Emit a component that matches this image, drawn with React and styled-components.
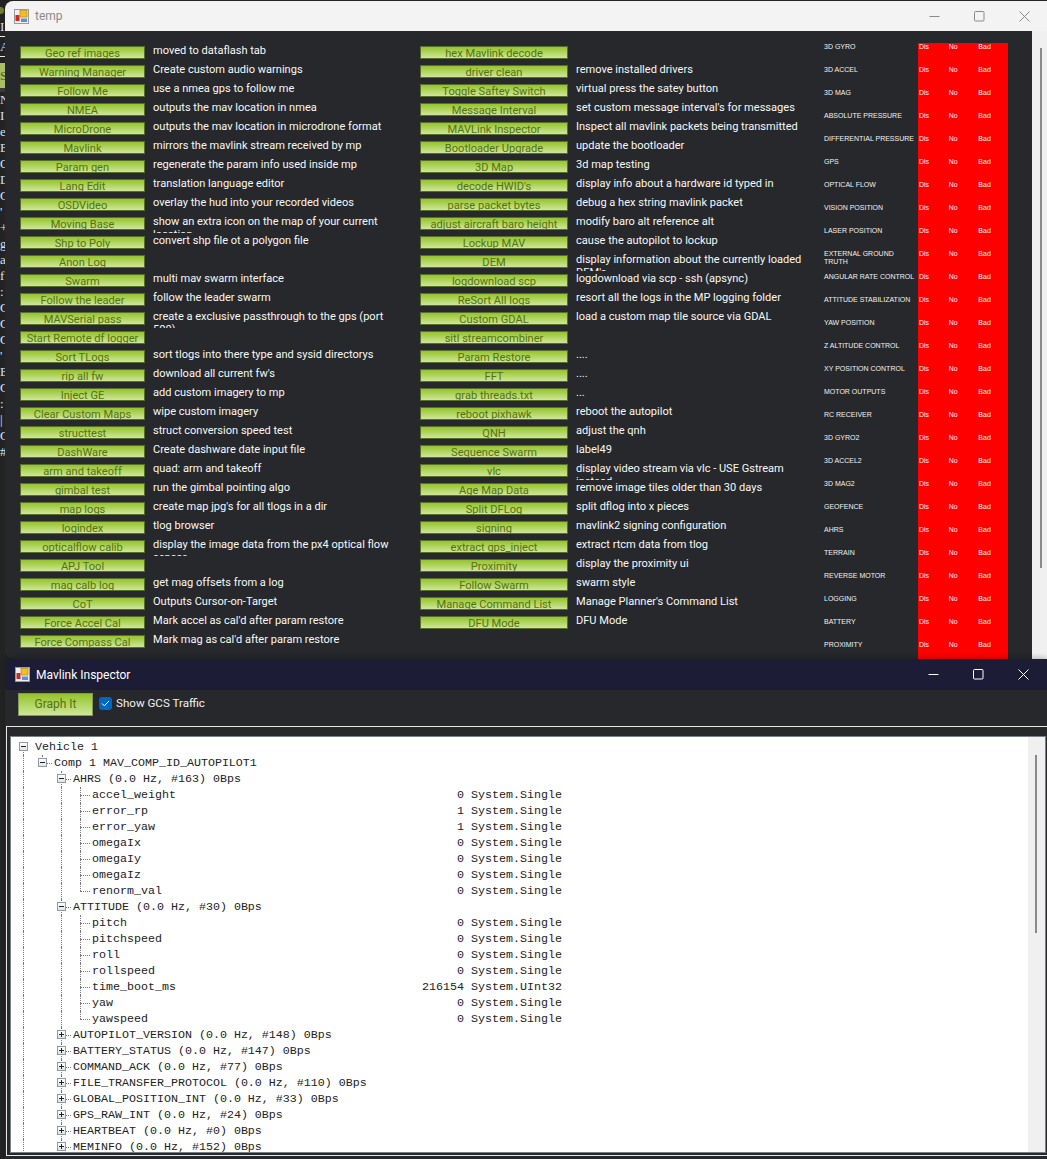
import React from "react"
import styled, { createGlobalStyle } from "styled-components"

const leftRows = [
  ["Geo ref images", "moved to dataflash tab"],
  ["Warning Manager", "Create custom audio warnings"],
  ["Follow Me", "use a nmea gps to follow me"],
  ["NMEA", "outputs the mav location in nmea"],
  ["MicroDrone", "outputs the mav location in microdrone format"],
  ["Mavlink", "mirrors the mavlink stream received by mp"],
  ["Param gen", "regenerate the param info used inside mp"],
  ["Lang Edit", "translation language editor"],
  ["OSDVideo", "overlay the hud into your recorded videos"],
  ["Moving Base", "show an extra icon on the map of your current location"],
  ["Shp to Poly", "convert shp file ot a polygon file"],
  ["Anon Log", ""],
  ["Swarm", "multi mav swarm interface"],
  ["Follow the leader", "follow the leader swarm"],
  ["MAVSerial pass", "create a exclusive passthrough to the gps (port 500)"],
  ["Start Remote df logger", ""],
  ["Sort TLogs", "sort tlogs into there type and sysid directorys"],
  ["rip all fw", "download all current fw's"],
  ["Inject GE", "add custom imagery to mp"],
  ["Clear Custom Maps", "wipe custom imagery"],
  ["structtest", "struct conversion speed test"],
  ["DashWare", "Create dashware date input file"],
  ["arm and takeoff", "quad: arm and takeoff"],
  ["gimbal test", "run the gimbal pointing algo"],
  ["map logs", "create map jpg's for all tlogs in a dir"],
  ["logindex", "tlog browser"],
  ["opticalflow calib", "display the image data from the px4 optical flow sensor"],
  ["APJ Tool", ""],
  ["mag calb log", "get mag offsets from a log"],
  ["CoT", "Outputs Cursor-on-Target"],
  ["Force Accel Cal", "Mark accel as cal'd after param restore"],
  ["Force Compass Cal", "Mark mag as cal'd after param restore"],
]

const rightRows = [
  ["hex Mavlink decode", ""],
  ["driver clean", "remove installed drivers"],
  ["Toggle Saftey Switch", "virtual press the satey button"],
  ["Message Interval", "set custom message interval's for messages"],
  ["MAVLink Inspector", "Inspect all mavlink packets being transmitted"],
  ["Bootloader Upgrade", "update the bootloader"],
  ["3D Map", "3d map testing"],
  ["decode HWID's", "display info about a hardware id typed in"],
  ["parse packet bytes", "debug a hex string mavlink packet"],
  ["adjust aircraft baro height", "modify baro alt reference alt"],
  ["Lockup MAV", "cause the autopilot to lockup"],
  ["DEM", "display information about the currently loaded DEM's"],
  ["logdownload scp", "logdownload via scp - ssh (apsync)"],
  ["ReSort All logs", "resort all the logs in the MP logging folder"],
  ["Custom GDAL", "load a custom map tile source via GDAL"],
  ["sitl streamcombiner", ""],
  ["Param Restore", "...."],
  ["FFT", "...."],
  ["grab threads.txt", "..."],
  ["reboot pixhawk", "reboot the autopilot"],
  ["QNH", "adjust the qnh"],
  ["Sequence Swarm", "label49"],
  ["vlc", "display video stream via vlc - USE Gstream instead"],
  ["Age Map Data", "remove image tiles older than 30 days"],
  ["Split DFLog", "split dflog into x pieces"],
  ["signing", "mavlink2 signing configuration"],
  ["extract gps_inject", "extract rtcm data from tlog"],
  ["Proximity", "display the proximity ui"],
  ["Follow Swarm", "swarm style"],
  ["Manage Command List", "Manage Planner's Command List"],
  ["DFU Mode", "DFU Mode"],
]

const sensors = [
  "3D GYRO", "3D ACCEL", "3D MAG", "ABSOLUTE PRESSURE", "DIFFERENTIAL PRESSURE", "GPS",
  "OPTICAL FLOW", "VISION POSITION", "LASER POSITION", "EXTERNAL GROUND TRUTH",
  "ANGULAR RATE CONTROL", "ATTITUDE STABILIZATION", "YAW POSITION", "Z ALTITUDE CONTROL",
  "XY POSITION CONTROL", "MOTOR OUTPUTS", "RC RECEIVER", "3D GYRO2", "3D ACCEL2", "3D MAG2",
  "GEOFENCE", "AHRS", "TERRAIN", "REVERSE MOTOR", "LOGGING", "BATTERY", "PROXIMITY",
]

const ahrsFields = [
  ["accel_weight", "0", "System.Single"],
  ["error_rp", "1", "System.Single"],
  ["error_yaw", "1", "System.Single"],
  ["omegaIx", "0", "System.Single"],
  ["omegaIy", "0", "System.Single"],
  ["omegaIz", "0", "System.Single"],
  ["renorm_val", "0", "System.Single"],
]

const attitudeFields = [
  ["pitch", "0", "System.Single"],
  ["pitchspeed", "0", "System.Single"],
  ["roll", "0", "System.Single"],
  ["rollspeed", "0", "System.Single"],
  ["time_boot_ms", "216154", "System.UInt32"],
  ["yaw", "0", "System.Single"],
  ["yawspeed", "0", "System.Single"],
]

const collapsed = [
  "AUTOPILOT_VERSION (0.0 Hz, #148) 0Bps",
  "BATTERY_STATUS (0.0 Hz, #147) 0Bps",
  "COMMAND_ACK (0.0 Hz, #77) 0Bps",
  "FILE_TRANSFER_PROTOCOL (0.0 Hz, #110) 0Bps",
  "GLOBAL_POSITION_INT (0.0 Hz, #33) 0Bps",
  "GPS_RAW_INT (0.0 Hz, #24) 0Bps",
  "HEARTBEAT (0.0 Hz, #0) 0Bps",
  "MEMINFO (0.0 Hz, #152) 0Bps",
]

// what shows of the window behind, cut off at the edge of the two windows
const behindLetters = ["N", "I", "e", "E", "Q", "D", "C", "'", "+", "g", "a", "f", ":", "C", "C", "C", "'", "E", "C", ":", "|", "C", "#"]

const GlobalStyle = createGlobalStyle`
  html, body {
    margin: 0;
    padding: 0;
    background: #232323;
  }
  #root {
    width: 1047px;
    height: 1159px;
    overflow: hidden;
  }
`

const Desktop = styled.div`
  width: 1047px;
  height: 1159px;
  display: flex;
  font-family: Roboto, "Liberation Sans", sans-serif;
`

const BehindStrip = styled.div`
  width: 5px;
  flex-shrink: 0;
  overflow: hidden;
  color: #d5e2ee;
  font-family: "Liberation Serif", serif;
  font-size: 13px;
`

const BehindBlob = styled.div`
  width: 4px;
  height: 7px;
  margin: 7px 0 3px;
  background: #6f7d2a;
  border-radius: 0 4px 4px 0;
`

const BehindLine = styled.div`
  height: ${props => props.$height}px;
  line-height: ${props => props.$height}px;
  border-bottom: ${props => props.$rule ? "1px solid #e8e8e8" : "none"};
  white-space: pre;
`

const BehindBlock = styled.div`
  height: 25px;
  margin-top: 6px;
  line-height: 25px;
  background: #a9bf63;
  color: #4f5a22;
  border-bottom: 4px solid #3a3a3a;
`

const Windows = styled.div`
  flex: 1;
  min-width: 0;
  display: flex;
  flex-direction: column;
`

const TempWindow = styled.div`
  height: 658px;
  margin-top: 1px;
  background: #26282b;
  border-radius: 8px 0 0 8px;
  overflow: hidden;
  display: flex;
  flex-direction: column;
  flex-shrink: 0;
`

const TitleBar = styled.div`
  height: ${props => props.$height}px;
  flex-shrink: 0;
  display: flex;
  align-items: center;
  padding-left: ${props => props.$pad}px;
  background: ${props => props.$dark ? "#1c1c36" : "#f3f3f3"};
  color: ${props => props.$dark ? "#ffffff" : "#8a8a8a"};
  font-size: 12px;
`

const AppIcon = styled.svg`
  width: 15px;
  height: 15px;
  margin-right: 6px;
`

const WinButtons = styled.div`
  margin-left: auto;
  margin-right: ${props => props.$right}px;
  display: flex;
`

const WinButton = styled.div`
  width: 45px;
  height: 30px;
  display: flex;
  align-items: center;
  justify-content: center;
`

const TempBody = styled.div`
  flex: 1;
  display: flex;
  min-height: 0;
`

const Columns = styled.div`
  flex: 1;
  display: flex;
  min-width: 0;
  padding-top: 12px;
`

const Column = styled.div`
  width: ${props => props.$width}px;
  padding-left: ${props => props.$left}px;
  flex-shrink: 0;
  box-sizing: border-box;
`

const ActionRow = styled.div`
  height: 19px;
  display: flex;
`

const GreenButton = styled.div`
  width: ${props => props.$width}px;
  height: 13px;
  margin-top: 3px;
  flex-shrink: 0;
  box-sizing: border-box;
  border: 1px solid #56702a;
  background: linear-gradient(#94c42a, #cfe69a);
  color: #55720f;
  font-size: 11.1px;
  line-height: 13px;
  text-align: center;
  white-space: nowrap;
  overflow: hidden;
`

const ActionText = styled.div`
  width: 238px;
  height: 19px;
  padding-top: 1px;
  margin-left: 8px;
  box-sizing: border-box;
  overflow: hidden;
  color: #f8f8f8;
  font-size: 11.05px;
  line-height: 13px;
`

const StatusPanel = styled.div`
  width: 184px;
  margin-right: 24px;
  flex-shrink: 0;
  display: flex;
  flex-direction: column;
  padding-top: 12px;
  background: linear-gradient(#ff0000, #ff0000) no-repeat 94px 12px / 90px 100%;
`

const StatusRow = styled.div`
  height: 23px;
  flex-shrink: 0;
  display: flex;
  align-items: flex-start;
  color: #f2f2f2;
  font-family: "Liberation Sans", sans-serif;
  font-size: 7px;
  line-height: 8px;
`

const StatusName = styled.div`
  width: 95px;
  padding-right: 3px;
  box-sizing: border-box;
  flex-shrink: 0;
`

const StatusCell = styled.div`
  width: 30px;
`

const ScrollTrack = styled.div`
  width: ${props => props.$width}px;
  flex-shrink: 0;
  background: #f0f0f0;
  padding-top: ${props => props.$top}px;
  padding-left: ${props => props.$left}px;
  box-sizing: border-box;
`

const ScrollThumb = styled.div`
  width: 2px;
  height: ${props => props.$height}px;
  background: #8a8a8a;
`

const InspectorWindow = styled.div`
  flex: 1;
  min-height: 0;
  background: #26282b;
  border-radius: 8px 0 0 0;
  box-shadow: 0 -2px 5px rgba(0, 0, 0, 0.2);
  overflow: hidden;
  display: flex;
  flex-direction: column;
`

const Toolbar = styled.div`
  height: 36px;
  flex-shrink: 0;
  display: flex;
  padding: 3px 0 0 13px;
  box-sizing: border-box;
  color: #f2f2f2;
  font-size: 11.6px;
`

const GraphButton = styled.div`
  width: 75px;
  height: 23px;
  box-sizing: border-box;
  border: 1px solid #7f9a55;
  background: linear-gradient(#94c42a, #cfe69a);
  color: #55720f;
  font-size: 12px;
  line-height: 21px;
  text-align: center;
`

const CheckBox = styled.div`
  width: 13px;
  height: 13px;
  margin: 4px 4px 0 6px;
  border-radius: 3px;
  background: #0067c0;
  display: flex;
  align-items: center;
  justify-content: center;
`

const CheckLabel = styled.div`
  line-height: 20px;
`

const TreeFrame = styled.div`
  flex: 1;
  min-height: 0;
  margin: 0 0 3px 1px;
  padding: 9px 0 2px 3px;
  border-top: 1px solid #e6e6e6;
  border-left: 1px solid #e6e6e6;
  border-bottom: 1px solid #e6e6e6;
  display: flex;
`

const TreeBox = styled.div`
  flex: 1;
  min-width: 0;
  display: flex;
  margin-right: 1px;
  border: 1px solid #7a8088;
  background: #ffffff;
  overflow: hidden;
`

const Tree = styled.div`
  flex: 1;
  padding: 2px 0 0 5px;
  font-family: "Liberation Mono", "Courier New", monospace;
  font-size: 11.67px;
  color: #222222;
`

const TreeRow = styled.div`
  height: 16px;
  display: flex;
  align-items: stretch;
  white-space: pre;
  line-height: 16px;
`

const Guide = styled.div`
  width: 19px;
  flex-shrink: 0;
  position: relative;

  ${props => props.$line && `
    &::before {
      content: "";
      position: absolute;
      left: 7px;
      top: ${props.$fromMiddle ? "8px" : "0"};
      bottom: 0;
      border-left: 1px dotted #777777;
    }
  `}
`

const Elbow = styled(Guide)`
  &::after {
    content: "";
    position: absolute;
    left: 7px;
    top: 8px;
    width: 10px;
    border-top: 1px dotted #777777;
  }
  &::before {
    content: "";
    position: absolute;
    left: 7px;
    top: 0;
    bottom: ${props => props.$last ? "8px" : "0"};
    border-left: 1px dotted #777777;
  }
`

const Expander = styled.div`
  position: absolute;
  left: 3px;
  top: 3px;
  width: 9px;
  height: 9px;
  box-sizing: border-box;
  border: 1px solid #8d9aa8;
  background: linear-gradient(#ffffff, #e3e3e3);
  z-index: 1;

  &::before {
    content: "";
    position: absolute;
    left: 1px;
    top: 3px;
    width: 5px;
    height: 1px;
    background: #222222;
  }

  ${props => props.$plus && `
    &::after {
      content: "";
      position: absolute;
      left: 3px;
      top: 1px;
      width: 1px;
      height: 5px;
      background: #222222;
    }
  `}
`

const FieldName = styled.div`
  width: 322px;
  flex-shrink: 0;
`

const FieldValue = styled.div`
  width: 50px;
  flex-shrink: 0;
  text-align: right;
`

const FieldType = styled.div`
  margin-left: 7px;
`

const Icon = () => (
  <AppIcon viewBox="0 0 15 15">
    <rect x="0.5" y="0.5" width="14" height="14" fill="#efefef" stroke="#9a9a9a" />
    <rect x="1.5" y="6" width="4" height="6" fill="#cf2a22" />
    <rect x="6" y="1.5" width="7" height="6.5" fill="#f4bd22" stroke="#b8881a" strokeWidth="0.7" />
    <rect x="7" y="9.5" width="6" height="3.5" fill="#5a8fe0" />
  </AppIcon>
)

const WindowControls = ({ color, right }) => (
  <WinButtons $right={right}>
    <WinButton>
      <svg width="11" height="11" viewBox="0 0 11 11"><path d="M0.5 5.5h10" stroke={color} strokeWidth="1" /></svg>
    </WinButton>
    <WinButton>
      <svg width="11" height="11" viewBox="0 0 11 11"><rect x="0.5" y="0.5" width="9.5" height="9.5" rx="1" fill="none" stroke={color} /></svg>
    </WinButton>
    <WinButton>
      <svg width="11" height="11" viewBox="0 0 11 11"><path d="M0.5 0.5l10 10M10.5 0.5l-10 10" stroke={color} /></svg>
    </WinButton>
  </WinButtons>
)

const Actions = ({ rows, buttonWidth }) => rows.map(([label, text], i) => (
  <ActionRow key={i}>
    <GreenButton $width={buttonWidth}>{label}</GreenButton>
    <ActionText>{text}</ActionText>
  </ActionRow>
))

const FieldRows = ({ fields }) => fields.map(([name, value, type], i) => (
  <TreeRow key={name}>
    <Guide $line />
    <Guide />
    <Guide $line />
    <Elbow $last={i === fields.length - 1} />
    <FieldName>{name}</FieldName>
    <FieldValue>{value}</FieldValue>
    <FieldType>{type}</FieldType>
  </TreeRow>
))

const MessageRow = ({ text, plus }) => (
  <TreeRow>
    <Guide $line />
    <Guide />
    <Elbow><Expander $plus={plus} /></Elbow>
    {text}
  </TreeRow>
)

const App = () => (
  <>
    <GlobalStyle />
    <Desktop>
      <BehindStrip>
        <BehindBlob />
        <BehindLine $height={19} $rule>I</BehindLine>
        <BehindLine $height={19} $rule>A</BehindLine>
        <BehindBlock>S</BehindBlock>
        {behindLetters.map((letter, i) => <BehindLine key={i} $height={16}>{letter}</BehindLine>)}
      </BehindStrip>
      <Windows>
        <TempWindow>
          <TitleBar $height={30} $pad={9}>
            <Icon />
            temp
            <WindowControls color="#8a8a8a" right={0} />
          </TitleBar>
          <TempBody>
            <Columns>
              <Column $width={410} $left={15}>
                <Actions rows={leftRows} buttonWidth={125} />
              </Column>
              <Column $width={400} $left={5}>
                <Actions rows={rightRows} buttonWidth={148} />
              </Column>
            </Columns>
            <StatusPanel>
              {sensors.map(name => (
                <StatusRow key={name}>
                  <StatusName>{name}</StatusName>
                  <StatusCell>Dis</StatusCell>
                  <StatusCell>No</StatusCell>
                  <StatusCell>Bad</StatusCell>
                </StatusRow>
              ))}
            </StatusPanel>
            <ScrollTrack $width={15} $top={17} $left={8}>
              <ScrollThumb $height={520} />
            </ScrollTrack>
          </TempBody>
        </TempWindow>
        <InspectorWindow>
          <TitleBar $height={31} $pad={10} $dark>
            <Icon />
            Mavlink Inspector
            <WindowControls color="#ffffff" right={1} />
          </TitleBar>
          <Toolbar>
            <GraphButton>Graph It</GraphButton>
            <CheckBox>
              <svg width="9" height="9" viewBox="0 0 9 9"><path d="M1 4.5l2.3 2.3L8 2" fill="none" stroke="#ffffff" /></svg>
            </CheckBox>
            <CheckLabel>Show GCS Traffic</CheckLabel>
          </Toolbar>
          <TreeFrame>
            <TreeBox>
              <Tree>
                <TreeRow><Guide $line $fromMiddle><Expander /></Guide>Vehicle 1</TreeRow>
                <TreeRow><Guide $line /><Elbow $last><Expander /></Elbow>Comp 1 MAV_COMP_ID_AUTOPILOT1</TreeRow>
                <MessageRow text="AHRS (0.0 Hz, #163) 0Bps" />
                <FieldRows fields={ahrsFields} />
                <MessageRow text="ATTITUDE (0.0 Hz, #30) 0Bps" />
                <FieldRows fields={attitudeFields} />
                {collapsed.map(text => <MessageRow key={text} text={text} plus />)}
              </Tree>
              <ScrollTrack $width={17} $top={18} $left={7}>
                <ScrollThumb $height={178} />
              </ScrollTrack>
            </TreeBox>
          </TreeFrame>
        </InspectorWindow>
      </Windows>
    </Desktop>
  </>
)

export default App
